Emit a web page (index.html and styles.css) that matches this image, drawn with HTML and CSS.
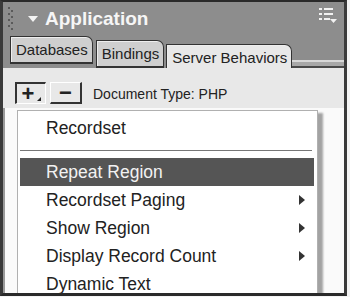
FILE: index.html
```html
<html>
<head>
  <title>Application</title>
  <link rel="stylesheet" href="styles.css">
</head>
<body>
  <div class="panel">
    <div class="titlebar">
      <svg class="gripper" width="6" height="24" viewBox="0 0 6 24">
        <rect x="0" y="0" width="2" height="2" fill="#5a5a5a"/>
        <rect x="3" y="3" width="2" height="2" fill="#5a5a5a"/>
        <rect x="0" y="6" width="2" height="2" fill="#5a5a5a"/>
        <rect x="3" y="9" width="2" height="2" fill="#5a5a5a"/>
        <rect x="0" y="12" width="2" height="2" fill="#5a5a5a"/>
        <rect x="3" y="15" width="2" height="2" fill="#5a5a5a"/>
        <rect x="0" y="18" width="2" height="2" fill="#5a5a5a"/>
        <rect x="3" y="21" width="2" height="2" fill="#5a5a5a"/>
      </svg>
      <span class="collapse"></span>
      <h1 class="title">Application</h1>
      <svg class="options" width="18" height="16" viewBox="0 0 18 16">
        <rect x="0" y="0" width="3" height="2" fill="#f2f2f2"/>
        <rect x="5" y="0" width="9" height="2" fill="#f2f2f2"/>
        <rect x="0" y="5" width="3" height="2" fill="#f2f2f2"/>
        <rect x="5" y="5" width="9" height="2" fill="#f2f2f2"/>
        <rect x="0" y="10" width="3" height="2" fill="#f2f2f2"/>
        <rect x="5" y="10" width="6" height="2" fill="#f2f2f2"/>
        <path d="M11 11 L18 11 L14.5 15 Z" fill="#f2f2f2"/>
      </svg>
    </div>
    <div class="tabs">
      <div class="tab tab-first">Databases</div>
      <div class="tab tab-second">Bindings</div>
      <div class="tab tab-active">Server Behaviors</div>
      <div class="tab-rest"></div>
    </div>
    <div class="toolbar">
      <button class="tool tool-add">+<span class="drop"></span></button>
      <button class="tool tool-remove">&minus;</button>
      <span class="doctype">Document Type: PHP</span>
    </div>
    <div class="content">
      <ul class="menu">
        <li class="item">Recordset</li>
        <li class="separator"></li>
        <li class="item selected">Repeat Region</li>
        <li class="item">Recordset Paging <span class="arrow"></span></li>
        <li class="item">Show Region <span class="arrow"></span></li>
        <li class="item">Display Record Count <span class="arrow"></span></li>
        <li class="item">Dynamic Text</li>
      </ul>
    </div>
  </div>
</body>
</html>
```

FILE: styles.css
```css
/* Panel gris façon Dreamweaver */
body {
  margin: 0;
  background: #f4f4f4;
  font-family: "Liberation Sans", Arial, sans-serif;
  color: #222;
}
.panel {
  box-sizing: border-box;
  width: 347px;
  height: 296px;
  border-top: 2px solid #2a2a2a;
  border-left: 3px solid #3a3a3a;
  border-right: 3px solid #3a3a3a;
  border-bottom: 3px solid #2a2a2a;
  background: #8d8d8d;
  overflow: hidden;
  display: flex;
  flex-direction: column;
}
/* Barre de titre */
.titlebar {
  height: 34px;
  display: flex;
  align-items: center;
  flex-shrink: 0;
}
.gripper {
  margin-left: 5px;
}
.collapse {
  margin-left: 14px;
  width: 0;
  height: 0;
  border-left: 5px solid transparent;
  border-right: 5px solid transparent;
  border-top: 6px solid #f4f4f4;
}
.title {
  margin: 0 0 0 7px;
  font-size: 19px;
  font-weight: bold;
  color: #f6f6f6;
}
.options {
  margin-left: auto;
  margin-right: 7px;
  margin-top: -6px;
}
/* Onglets */
.tabs {
  height: 32px;
  display: flex;
  align-items: flex-start;
  flex-shrink: 0;
  padding-left: 7px;
}
.tab {
  box-sizing: border-box;
  height: 28px;
  padding: 4px 4px 0 5px;
  font-size: 15px;
  background: #cfcfcf;
  border: 1px solid #333;
  border-bottom: 2px solid #333;
  border-radius: 0 7px 0 0;
  box-shadow: inset 1px 1px 0 #eee;
}
.tab-second {
  margin-top: 4px;
  margin-left: 3px;
}
.tab-active {
  margin-top: 8px;
  margin-left: 2px;
  height: 25px;
  background: #e8e8e8;
  border-bottom: none;
}
.tab-rest {
  flex: 1;
  align-self: flex-end;
  height: 8px;
  border-top: 2px solid #d8d8d8;
  border-bottom: 2px solid #4a4a4a;
  background: #a8a8a8;
  box-sizing: border-box;
}
/* Barre d'outils */
.toolbar {
  height: 40px;
  flex-shrink: 0;
  background: #e8e8e8;
  display: flex;
  align-items: flex-start;
  padding: 14px 0 0 12px;
  box-sizing: border-box;
}
.tool {
  position: relative;
  box-sizing: border-box;
  height: 22px;
  padding: 0;
  background: #e8e8e8;
  font-family: "Liberation Sans", Arial, sans-serif;
  font-weight: bold;
  font-size: 22px;
  line-height: 18px;
  color: #222;
}
.tool-add {
  width: 31px;
  border-top: 2px solid #333;
  border-left: 2px solid #333;
  border-right: 1px solid #fff;
  border-bottom: 1px solid #fff;
  padding-right: 6px;
}
.drop {
  position: absolute;
  right: 4px;
  bottom: 2px;
  width: 0;
  height: 0;
  border-left: 4px solid transparent;
  border-bottom: 4px solid #222;
}
.tool-remove {
  width: 32px;
  margin-left: 4px;
  border-top: 1px solid #fff;
  border-left: 1px solid #fff;
  border-right: 2px solid #333;
  border-bottom: 2px solid #333;
}
.doctype {
  margin-left: 11px;
  margin-top: 4px;
  font-size: 14px;
}
/* Zone blanche et menu déroulant */
.content {
  flex: 1;
  background: #fafafa;
  border-left: 2px solid #9a9a9a;
  padding: 2px 0 0 12px;
}
.menu {
  box-sizing: border-box;
  width: 301px;
  margin: 0;
  padding: 3px 3px 0 2px;
  list-style: none;
  background: #fff;
  border: 1px solid #b0b0b0;
  box-shadow: 5px 3px 2px rgba(0, 0, 0, 0.35);
}
.item {
  height: 28px;
  display: flex;
  align-items: center;
  justify-content: space-between;
  padding: 0 9px 0 26px;
  font-size: 17.5px;
}
.selected {
  background: #555;
  color: #f2f2f2;
}
.separator {
  height: 1px;
  margin: 8px 2px 7px 0;
  background: #777;
}
.arrow {
  width: 0;
  height: 0;
  border-top: 5px solid transparent;
  border-bottom: 5px solid transparent;
  border-left: 6px solid #333;
}
```
